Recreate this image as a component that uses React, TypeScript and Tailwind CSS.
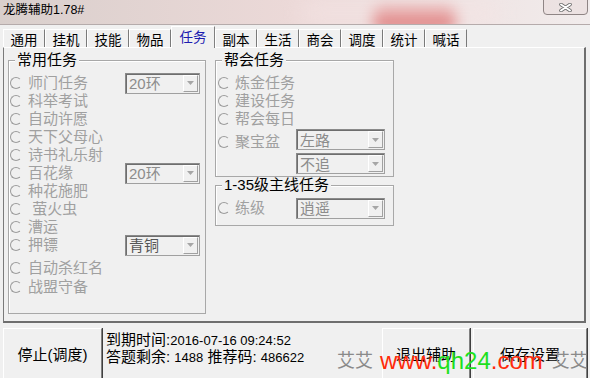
import React from 'react';

const tabs = ['通用', '挂机', '技能', '物品', '任务', '副本', '生活', '商会', '调度', '统计', '喊话'];

const common = [
  { label: '师门任务', combo: '20环' },
  { label: '科举考试' },
  { label: '自动许愿' },
  { label: '天下父母心' },
  { label: '诗书礼乐射' },
  { label: '百花缘', combo: '20环' },
  { label: '种花施肥' },
  { label: '\u00a0萤火虫' },
  { label: '漕运' },
  { label: '押镖', combo: '青铜', dark: true },
  { label: '自动杀红名', extra: 'mt-[5px]' },
  { label: '战盟守备', extra: 'mt-[1px]' },
];

const Radio = () => (
  <span className="h-[12px] w-[12px] shrink-0 rounded-full border border-[#9c9c9c] border-r-[#f0f0f0] bg-[#f0f0f0]" />
);

const Combo = ({ value, w, dark }: { value: string; w: string; dark?: boolean }) => (
  <div
    className={`flex h-[21px] ${w} shrink-0 items-center border border-[#a0a0a0] border-t-[#8a8a8a] border-l-[#8a8a8a] bg-[#f0f0f0] shadow-[inset_1px_1px_0_#6e6e6e]`}
  >
    <span className={`flex-1 pl-[3px] pt-px text-[15px] leading-none ${dark ? 'text-[#555555]' : 'text-[#8c8c8c]'}`}>
      {value}
    </span>
    <span className="mr-px flex h-[17px] w-[15px] items-center justify-center border border-t-white border-l-white border-b-[#a0a0a0] border-r-[#a0a0a0] bg-[#f0f0f0]">
      <svg width="7" height="4" viewBox="0 0 7 4">
        <path d="M0 0h7L3.5 4z" fill="#a6a6a6" />
      </svg>
    </span>
  </div>
);

const Group = ({ title, className, children }: { title: string; className: string; children: React.ReactNode }) => (
  <fieldset className={`border border-[#a8a8a8] shadow-[inset_1px_1px_0_#ffffff] ${className}`}>
    <legend className="ml-[6px] bg-[#f0f0f0] px-[2px] text-[15px] leading-[16px] text-black">{title}</legend>
    {children}
  </fieldset>
);

const Label = ({ text }: { text: string }) => (
  <span className="whitespace-pre text-[15px] leading-none text-[#a0a0a0]">{text}</span>
);

function TitleBar() {
  return (
    <div className="relative h-[25px] shrink-0 overflow-hidden border-b border-[#b5abab] bg-linear-to-r from-[#d9cfcc] via-[#ecd9d8] to-[#f1ecec]">
      <div className="absolute left-[372px] top-[9px] h-[20px] w-[85px] rounded-full bg-[#d23a3a] opacity-80 blur-[7px]" />
      <div className="absolute left-[300px] top-[2px] h-[22px] w-[200px] rounded-full bg-[#f5e4e4] opacity-60 blur-[10px]" />
      <span className="relative ml-[3px] block pt-[3px] text-[12.5px] leading-[15px] text-black">龙腾辅助1.78#</span>
      <div className="absolute left-[543px] top-[-1px] flex h-[16px] w-[45px] items-center justify-center rounded-b-[4px] border border-[#8f8585] bg-[#eadcdc]/60">
        <svg width="13" height="9" viewBox="0 0 13 9">
          <path d="M2 1.5l9 6M11 1.5l-9 6" stroke="#6c6c6c" strokeWidth="3.6" strokeLinecap="round" />
          <path d="M2 1.5l9 6M11 1.5l-9 6" stroke="#ffffff" strokeWidth="2" strokeLinecap="round" />
        </svg>
      </div>
    </div>
  );
}

function Tabs() {
  return (
    <div className="relative z-10 flex h-[22px] shrink-0 items-end pl-[3px]">
      {tabs.map((t) =>
        t === '任务' ? (
          <div
            key={t}
            className="-mb-px flex h-[22px] w-[44px] justify-center border-l border-t border-r border-l-white border-t-white border-r-[#808080] bg-[#f0f0f0] pt-[3px] text-[13.5px] leading-[16px] text-[#1c1cb0]"
          >
            {t}
          </div>
        ) : (
          <div
            key={t}
            className="flex h-[18px] w-[42px] justify-center border-r border-t border-l border-t-white border-l-white border-r-[#7a7a7a] pt-[3px] text-[13.5px] leading-[16px] text-black"
          >
            {t}
          </div>
        )
      )}
    </div>
  );
}

function Panel() {
  return (
    <div className="ml-[3px] flex h-[276px] w-[583px] shrink-0 items-start border-l border-t border-r-2 border-b-2 border-l-[#7a7a7a] border-t-white border-r-[#6e6e6e] border-b-[#6e6e6e] pt-[4px]">
      <Group title="常用任务" className="ml-[4px] h-[262px] w-[198px] pt-[6px]">
        {common.map((r) => (
          <div key={r.label} className={`flex h-[18px] items-center pl-[1px] pr-[5px] ${r.extra ?? ''}`}>
            <Radio />
            <span className="ml-[6px]">
              <Label text={r.label} />
            </span>
            {r.combo && (
              <div className="ml-auto">
                <Combo value={r.combo} w="w-[75px]" dark={r.dark} />
              </div>
            )}
          </div>
        ))}
      </Group>

      <div className="ml-[9px] flex w-[179px] flex-col">
        <Group title="帮会任务" className="w-[179px] pb-[2px] pt-[6px]">
          {['炼金任务', '建设任务', '帮会每日'].map((l) => (
            <div key={l} className="flex h-[18px] items-center pl-[2px]">
              <Radio />
              <span className="ml-[5px]">
                <Label text={l} />
              </span>
            </div>
          ))}
          <div className="mt-px flex items-start">
            <div className="mt-[2px] flex h-[21px] w-[80px] items-center pl-[2px]">
              <Radio />
              <span className="ml-[5px]">
                <Label text="聚宝盆" />
              </span>
            </div>
            <div className="flex flex-col gap-[3px]">
              <Combo value="左路" w="w-[89px]" />
              <Combo value="不追" w="w-[89px]" />
            </div>
          </div>
        </Group>

        <Group title="1-35级主线任务" className="w-[179px] pb-[5px] pt-[3px]">
          <div className="flex items-center">
            <div className="flex w-[80px] items-center pl-[2px]">
              <Radio />
              <span className="ml-[5px]">
                <Label text="练级" />
              </span>
            </div>
            <Combo value="逍遥" w="w-[89px]" />
          </div>
        </Group>
      </div>
    </div>
  );
}

const Btn = ({ text, w }: { text: string; w: string }) => (
  <div
    className={`flex h-[52px] ${w} shrink-0 items-center justify-center border border-t-white border-l-white border-r-[#808080] border-b-[#808080] bg-[#f0f0f0] text-[15px] leading-none text-black shadow-[1px_0_0_#404040]`}
  >
    {text}
  </div>
);

function Bottom() {
  return (
    <div className="flex flex-1 items-start overflow-hidden pl-[3px] pt-[5px]">
      <Btn text="停止(调度)" w="w-[99px]" />
      <div className="ml-[4px] pt-[4px] text-[15px] leading-[16px] text-black">
        <div>
          到期时间:<span className="text-[13px]">2016-07-16 09:24:52</span>
        </div>
        <div>
          答题剩余: <span className="text-[13px]">1488</span> 推荐码: <span className="text-[13px]">486622</span>
        </div>
      </div>
      <div className="ml-auto flex gap-[3px] pr-[3px]">
        <Btn text="退出辅助" w="w-[88px]" />
        <Btn text="保存设置" w="w-[114px]" />
      </div>
    </div>
  );
}

export default function App() {
  return (
    <div className="relative flex h-[378px] w-[590px] flex-col overflow-hidden bg-[#f0f0f0] font-[family-name:'Liberation_Sans','Noto_Sans_CJK_SC',sans-serif]">
      <TitleBar />
      <Tabs />
      <Panel />
      <Bottom />
      <div className="pointer-events-none absolute left-[337px] top-[347px] flex items-center">
        <span className="text-[18px] leading-[28px] text-[#8a8a8a]">艾艾</span>
        <span className="ml-[7px] text-[24px] leading-[28px]">
          <span className="text-[#ff2a0a]">www.</span>
          <span className="text-[#1ee01e]">qh24</span>
          <span className="text-[#ff2a0a]">.com</span>
        </span>
        <span className="ml-[9px] text-[18px] leading-[28px] text-[#8a8a8a]">艾艾</span>
      </div>
    </div>
  );
}
